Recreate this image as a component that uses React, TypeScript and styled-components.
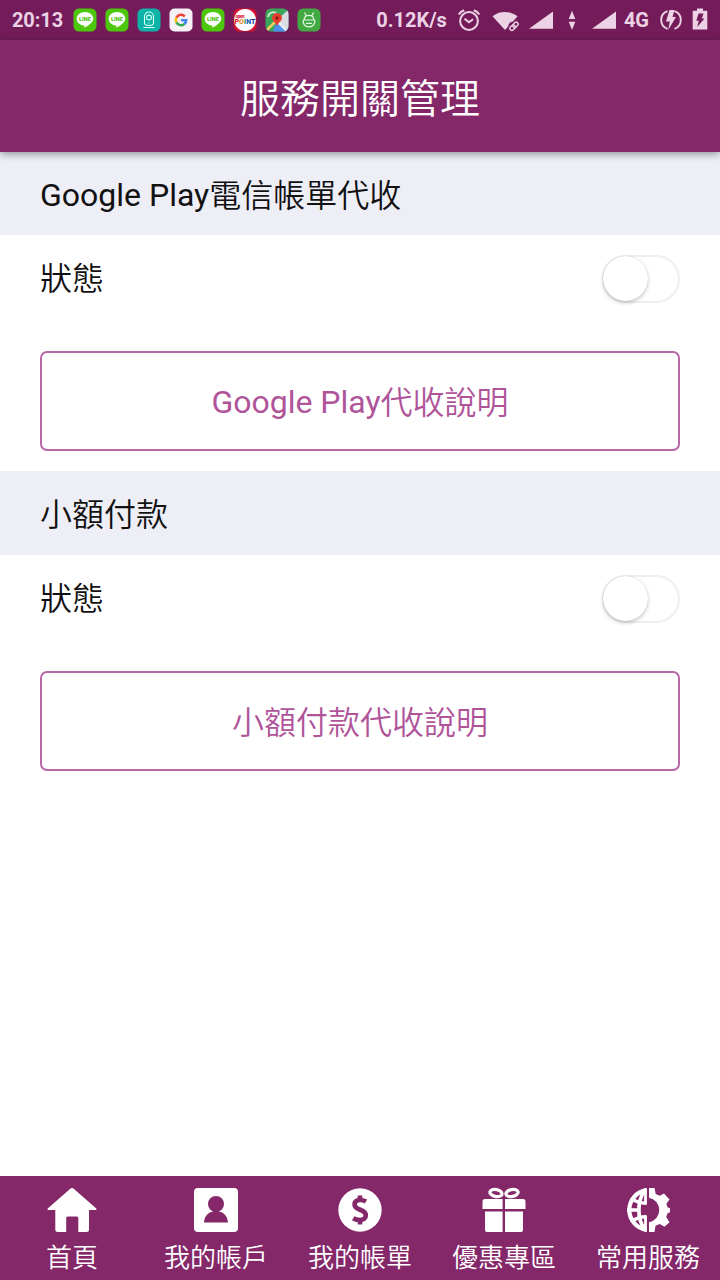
import React from 'react';
import styled, { createGlobalStyle } from 'styled-components';

const GlobalStyle = createGlobalStyle`
  * { box-sizing: border-box; }
  body {
    margin: 0;
    background: #fff;
    font-family: Roboto, "Noto Sans CJK TC DemiLight", "Noto Sans CJK TC Light", "Noto Sans CJK TC", sans-serif;
    color: #111;
  }
`;

const Screen = styled.div`
  display: flex;
  flex-direction: column;
  width: 720px;
  height: 1280px;
  background: #fff;
  overflow: hidden;
`;

const StatusBar = styled.div`
  display: flex;
  align-items: center;
  height: 40px;
  flex: none;
  padding: 0 12px;
  background: #741c5a;
  color: #ecd2e5;
  font-weight: 700;
  font-size: 20px;
  line-height: 40px;
`;

const Clock = styled.span`
  width: 61px;
  letter-spacing: -0.1px;
`;

const AppIcons = styled.div`
  display: flex;
  gap: 8px;
`;

const StatusIcon = styled.svg`
  display: block;
  flex: none;
`;

const Signals = styled.div`
  display: flex;
  align-items: center;
  margin-left: auto;
`;

const Gap = styled.span<{ $w: number }>`
  flex: none;
  width: ${(p) => p.$w}px;
`;

const Header = styled.header`
  position: relative;
  display: flex;
  align-items: center;
  justify-content: center;
  flex: none;
  height: 112px;
  padding-top: 7px;
  background: #84286a;
  box-shadow: 0 2px 8px rgba(0, 0, 0, 0.4);
`;

const Title = styled.h1`
  margin: 0;
  color: #fff;
  font-size: 40px;
  font-weight: 400;
  line-height: 56px;
`;

const Content = styled.main`
  flex: 1;
`;

const Han = styled.span`
  vertical-align: -1px;
`;

const SectionTitle = styled.h2`
  height: 83.33px;
  margin: 0;
  padding: 2px 40px 0;
  background: #eeeef7;
  font-size: 32px;
  font-weight: 400;
  line-height: 83px;
`;

const StateRow = styled.div`
  display: flex;
  justify-content: space-between;
  height: 116px;
  padding: 20px 40px 0;
  font-size: 32px;
  line-height: 48px;
`;

const Toggle = styled.button`
  display: flex;
  width: 78px;
  height: 48px;
  padding: 0;
  border: 2px solid #efefef;
  border-radius: 24px;
  background: #fff;
`;

const Knob = styled.span`
  width: 45px;
  height: 45px;
  margin: -1px 0 0 -1px;
  border-radius: 50%;
  background: #fff;
  box-shadow: 0 0 1px rgba(0, 0, 0, 0.2), 0 2px 4px rgba(0, 0, 0, 0.2);
`;

const InfoButton = styled.button`
  display: block;
  width: 640px;
  height: 100px;
  margin: 0 40px 20px;
  padding: 2px 0 0;
  border: 2px solid #b967a6;
  border-radius: 7px;
  background: #fff;
  color: #b0549a;
  font-family: inherit;
  font-size: 32px;
  line-height: 94px;
`;

const NavBar = styled.nav`
  display: grid;
  grid-template-columns: repeat(5, 144px);
  flex: none;
  height: 104px;
  background: #84286a;
`;

const NavItem = styled.a`
  display: flex;
  flex-direction: column;
  align-items: center;
  padding-top: 10px;
  color: #fff;
  font-size: 26px;
  line-height: 48px;
  white-space: nowrap;
`;

const NavIcon = styled.svg`
  display: block;
  flex: none;
  width: 52px;
  height: 48px;
`;

const IconText = styled.text`
  font-family: Roboto, sans-serif;
  font-weight: 900;
`;

const LineApp = () => (
  <StatusIcon width="24" height="24" viewBox="0 0 24 24">
    <rect x="0.5" y="0.5" width="23" height="23" rx="5.5" fill="#4cc70b" />
    <path d="M12 4C7.300 4 3.700 7 3.700 10.800c0 3.400 3 6.100 7 6.700.9.200.6 1.100.5 2.200 3.400-1.600 9.100-5 9.100-8.900C20.300 7 16.700 4 12 4z" fill="#fff" />
    <IconText x="12" y="13" fontSize="5.6" textAnchor="middle" textLength="12" fill="#4cc70b">LINE</IconText>
  </StatusIcon>
);

const CameraApp = () => (
  <StatusIcon width="24" height="24" viewBox="0 0 24 24" fill="none" stroke="#d9fffa">
    <rect x="0.500" y="0.500" width="23" height="23" rx="5.500" fill="#0eb3a7" stroke="none" />
    <path d="M7.500 15V8.500a4.500 4.500 0 0 1 9 0V15c0 2-1.500 2.500-4.500 2.500S7.500 17 7.500 15z" strokeWidth="1.100" />
    <circle cx="12" cy="9.500" r="2.400" strokeWidth="1.100" />
    <path d="M12 14.500v1M6.500 19.500h11" strokeWidth="1.200" />
  </StatusIcon>
);

const GoogleApp = () => (
  <StatusIcon width="24" height="24" viewBox="0 0 24 24" fill="none" strokeWidth="2.500">
    <rect x="0.500" y="0.500" width="23" height="23" rx="5" fill="#f5f1f6" stroke="none" />
    <path d="M15.800 8.300A5.200 5.200 0 0 0 7.400 9.600" stroke="#e94335" />
    <path d="M7.400 9.600a5.200 5.200 0 0 0 0 4.800" stroke="#fbbc05" />
    <path d="M7.400 14.400a5.200 5.200 0 0 0 8 1.600" stroke="#34a853" />
    <path d="M15.400 16c1.200-1.100 1.800-2.300 1.800-3.800H12" stroke="#4285f4" />
  </StatusIcon>
);

const PointApp = () => (
  <StatusIcon width="24" height="24" viewBox="0 0 24 24">
    <rect x="0.500" y="0.500" width="23" height="23" rx="5.500" fill="#d2122e" />
    <circle cx="12" cy="12" r="10.900" fill="#fff" />
    <IconText x="2.500" y="9.500" fontSize="4.500" textLength="9" fill="#e0213b">open</IconText>
    <IconText x="1.500" y="15.500" fontSize="7" textLength="21">
      <tspan fill="#d8232f">P</tspan>
      <tspan fill="#ef8b1d">O</tspan>
      <tspan fill="#1d9a52">I</tspan>
      <tspan fill="#1e5fb4">N</tspan>
      <tspan fill="#2a3590">T</tspan>
    </IconText>
  </StatusIcon>
);

const MapsApp = () => (
  <StatusIcon width="24" height="24" viewBox="0 0 24 24">
    <clipPath id="mapsClip"><rect x="0.500" y="0.500" width="23" height="23" rx="5.500" /></clipPath>
    <g clipPath="url(#mapsClip)">
      <rect width="24" height="24" fill="#3ba55b" />
      <path d="M12 12L24 1v23h-5z" fill="#d9dce0" />
      <path d="M12 12l12 12H8z" fill="#4f8ff0" />
      <path d="M0 24L10 14" stroke="#f5d15c" strokeWidth="2.500" />
      <path d="M12 13l11 11" stroke="#e7edf4" strokeWidth="2.500" />
      <path d="M3 9c1-5 6-6 9-3" stroke="#cfe9d5" strokeWidth="1.800" fill="none" />
      <path d="M12 19c0-4-5-5.500-5-9a5 5 0 0 1 10 0C17 13.500 12 15 12 19z" fill="#e5402f" />
      <circle cx="12" cy="10" r="1.800" fill="#8d1d18" />
    </g>
  </StatusIcon>
);

const AndroidApp = () => (
  <StatusIcon width="24" height="24" viewBox="0 0 24 24" fill="none" stroke="#e3f6df" strokeWidth="1.200">
    <rect x="0.500" y="0.500" width="23" height="23" rx="5.500" fill="#41a942" stroke="none" />
    <path d="M7.300 11.500c0-2.700 1.700-4.100 4.700-4.100s4.700 1.400 4.700 4.100M7.500 4.500l1.700 3.500M16.500 4.500l-1.700 3.500M6.300 12h11.400c.8 3.800-1.700 6.800-5.700 6.800S5.500 15.800 6.300 12zM9 15.300h6" />
  </StatusIcon>
);

const Alarm = () => (
  <StatusIcon width="24" height="24" viewBox="0 0 24 24" fill="none" stroke="#ecd2e5" strokeWidth="2">
    <circle cx="12" cy="13" r="8.900" />
    <path d="M1.800 6.500Q3.500 3.300 7.200 2.200M22.200 6.500Q20.500 3.300 16.800 2.200M7.500 10.700l4.500 3.600 4-3" />
  </StatusIcon>
);

const Wifi = () => (
  <StatusIcon width="28" height="24" viewBox="0 0 28 24">
    <path d="M.5 8.200C7.500 2.500 18 2.500 25.500 8.200l-4.500 5.300c-3 .2-4.500 2.200-4.700 4.700L13 22z" fill="#ecd2e5" />
    <g fill="none" stroke="#ecd2e5" strokeWidth="1.400" transform="rotate(-45 22 18.300)">
      <rect x="17" y="16.300" width="6" height="4" rx="2" />
      <rect x="21" y="16.300" width="6" height="4" rx="2" />
    </g>
  </StatusIcon>
);

const Signal = () => (
  <StatusIcon width="24" height="24" viewBox="0 0 24 24">
    <path d="M0 20.800L24 3.500v17.300z" fill="#ecd2e5" />
  </StatusIcon>
);

const DataArrows = () => (
  <StatusIcon width="8" height="24" viewBox="0 0 8 24">
    <path d="M4 2.800L7.300 11H.7zM4 22L.7 13.800h6.600z" fill="#ecd2e5" />
  </StatusIcon>
);

const Charge = () => (
  <StatusIcon width="22" height="24" viewBox="0 0 22 24">
    <path d="M7.500 3.200a9.300 9.300 0 0 0 0 17.600M14.500 3.200a9.300 9.300 0 0 1 0 17.600" fill="none" stroke="#ecd2e5" strokeWidth="1.900" />
    <path d="M9.500 2h5L12.500 9H16L8.200 22l1.600-8.500H6z" fill="#ecd2e5" />
  </StatusIcon>
);

const Battery = () => (
  <StatusIcon width="16" height="24" viewBox="0 0 16 24">
    <path d="M5 .5h6v2.300h4.300V21.500H.7V2.800H5z" fill="#ecd2e5" />
    <path d="M6.500 5.500h5L9.800 10.400h2.700L5.300 19l1.400-6.300H4.300z" fill="#741c5a" />
  </StatusIcon>
);

const HomeIcon = () => (
  <NavIcon viewBox="0 0 52 48">
    <path d="M26 2Q27 2 28 3L50.300 22.500q1 1.200-.5 1.500H43v19.500q0 2.500-2.500 2.500H32.300V32q0-1.500-1.500-1.500h-9.100q-1.500 0-1.500 1.500v14H11.800q-2.500 0-2.500-2.500V24H2.200q-1.500-.3-.5-1.500L24 3Q25 2 26 2z" fill="#fff" />
  </NavIcon>
);

const AccountIcon = () => (
  <NavIcon viewBox="0 0 52 48">
    <rect x="4" y="2" width="44" height="44" rx="4" fill="#fff" />
    <circle cx="26" cy="18" r="8" fill="#84286a" />
    <path d="M14 36.500c.5-6.500 4-10 9-11v-2h6v2c5 1 8.500 4.500 9 11z" fill="#84286a" />
  </NavIcon>
);

const BillIcon = () => (
  <NavIcon viewBox="0 0 52 48">
    <circle cx="26" cy="24" r="21.700" fill="#fff" />
    <path d="M32 15.500q-3-1.700-6.200-1.500c-3.500.2-5.200 2-5.200 4.500 0 6 11.200 4.500 11.200 10.700 0 3-2.200 4.800-5.800 4.800q-4 0-6.800-1.800M26 9.500V14M26 34v4.500" fill="none" stroke="#84286a" strokeWidth="4.700" />
  </NavIcon>
);

const GiftIcon = () => (
  <NavIcon viewBox="0 0 52 48" fill="#fff">
    <path d="M7 13h17.600v10H4.500v-7.500Q4.500 13 7 13zM27 13H45q2.500 0 2.500 2.500V23H27zM7 25.500h17.600V46H9q-2 0-2-2zM27 25.500H45V44q0 2-2 2H27z" />
    <g fill="none" stroke="#fff" strokeWidth="3.200">
      <ellipse cx="18" cy="7" rx="6.200" ry="3.500" transform="rotate(12 18 7)" />
      <ellipse cx="34" cy="7" rx="6.200" ry="3.500" transform="rotate(-12 34 7)" />
    </g>
  </NavIcon>
);

const ServiceIcon = () => (
  <NavIcon viewBox="0 0 52 48">
    <g fill="none" stroke="#fff" strokeWidth="4.200">
      <path d="M24.500 4.200a20 20 0 0 0 0 39.600" />
      <path d="M22.500 5C15 15 15 33 22.500 43" strokeWidth="3.700" />
      <path d="M5 24h12M9 12q6 5.200 15.500 5.200M9 36q6-5.200 15.500-5.200" strokeWidth="3.400" />
      <path d="M23.500 2.200v16M23.500 29.800v16" strokeWidth="2.800" />
    </g>
    <path d="M27 2h5.500l1.200 6 4 1.700L42 7.500l5.500 6-3.100 4.300 1 3.500 2.600 1v4l-2.600 1.200-1.200 3.500 3.300 5.300-5 4.500-4.800-2.800-4.200 1.800L32.500 46H27V36.300a12.500 12.500 0 0 0 0-24.600z" fill="#fff" />
  </NavIcon>
);

const sections = [
  { latin: 'Google Play', title: '電信帳單代收', action: '代收說明' },
  { latin: '', title: '小額付款', action: '小額付款代收說明' },
];

const navItems = [
  { label: '首頁', Icon: HomeIcon },
  { label: '我的帳戶', Icon: AccountIcon },
  { label: '我的帳單', Icon: BillIcon },
  { label: '優惠專區', Icon: GiftIcon },
  { label: '常用服務', Icon: ServiceIcon },
];

export default function App() {
  return (
    <Screen>
      <GlobalStyle />
      <StatusBar>
        <Clock>20:13</Clock>
        <AppIcons>
          <LineApp />
          <LineApp />
          <CameraApp />
          <GoogleApp />
          <LineApp />
          <PointApp />
          <MapsApp />
          <AndroidApp />
        </AppIcons>
        <Signals>
          <span>0.12K/s</span>
          <Gap $w={10} />
          <Alarm />
          <Gap $w={11} />
          <Wifi />
          <Gap $w={9} />
          <Signal />
          <Gap $w={15} />
          <DataArrows />
          <Gap $w={16} />
          <Signal />
          <Gap $w={8} />
          <span>4G</span>
          <Gap $w={11} />
          <Charge />
          <Gap $w={10} />
          <Battery />
        </Signals>
      </StatusBar>
      <Header>
        <Title>服務開關管理</Title>
      </Header>
      <Content>
        {sections.map((s) => (
          <section key={s.title}>
            <SectionTitle>{s.latin}<Han>{s.title}</Han></SectionTitle>
            <StateRow>
              <span>狀態</span>
              <Toggle role="switch" aria-checked={false} aria-label={s.title}>
                <Knob />
              </Toggle>
            </StateRow>
            <InfoButton>{s.latin}<Han>{s.action}</Han></InfoButton>
          </section>
        ))}
      </Content>
      <NavBar>
        {navItems.map(({ label, Icon }) => (
          <NavItem key={label}>
            <Icon />
            <span>{label}</span>
          </NavItem>
        ))}
      </NavBar>
    </Screen>
  );
}
